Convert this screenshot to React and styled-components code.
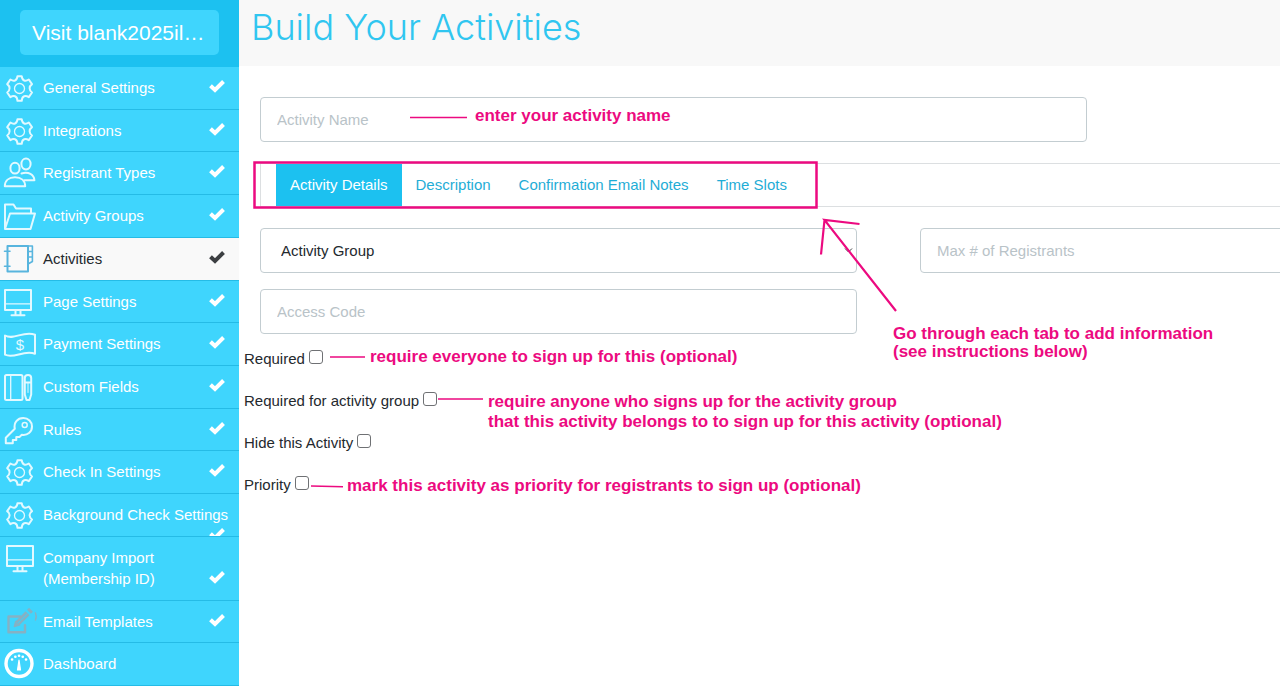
import React, { useState } from "react"
import styled, { createGlobalStyle, css } from "styled-components"

const GlobalStyle = createGlobalStyle`
    *, *::before, *::after {
        box-sizing: border-box;
    }

    body {
        margin: 0;
        background-color: #ffffff;
        color: #24292e;
        font-family: "Liberation Sans", Arial, sans-serif;
        font-size: 15px;
        line-height: 21px;
    }

    button, input, select {
        font: inherit;
    }
`

const pink = "#ec0a80"

const Page = styled.div`
    display: flex;
    min-height: 100vh;
    overflow: hidden;
`

const Sidebar = styled.aside`
    display: flex;
    flex-direction: column;
    flex: 0 0 239px;
    min-width: 0;
    background-color: #3fd5fd;
`

const SidebarTop = styled.div`
    padding: 10px 20px 12px;
    background-color: #1cc1f0;
`

const VisitButton = styled.button`
    display: block;
    width: 100%;
    height: 45px;
    padding: 0 12px;
    border: 0;
    border-radius: 5px;
    background-color: #3fd5fd;
    color: #ffffff;
    font-size: 21px;
    text-align: left;
    white-space: nowrap;
    cursor: pointer;
`

const Menu = styled.ul`
    display: flex;
    flex: 1;
    flex-direction: column;
    margin: 0;
    padding: 0;
    list-style: none;
`

const MenuItem = styled.li`
    display: flex;
    flex: 1 0 ${props => (props.$tall ? "63px" : "42px")};
    height: ${props => (props.$tall ? "63px" : "42px")};
    overflow: hidden;
    border-bottom: 1px solid #25bbe6;
    background-color: ${props => (props.$active ? "#f9f9f9" : "transparent")};
`

const MenuLink = styled.a`
    display: flex;
    flex: 1;
    gap: 5px;
    min-width: 0;
    padding: 0 14px 0 2px;
    color: ${props => (props.$active ? "#24292e" : "#ffffff")};
    text-decoration: none;
`

const MenuIcon = styled.span`
    display: flex;
    flex: 0 0 36px;
    height: 36px;
    margin-top: 3px;
    color: ${props => (props.$active ? "#58b5de" : "#e2f9ff")};
`

const MenuText = styled.span`
    display: flex;
    flex: 1;
    flex-wrap: wrap;
    align-content: flex-start;
    align-items: flex-end;
    justify-content: space-between;
    min-width: 0;
    padding-top: 10px;
    white-space: nowrap;
`

const Tick = styled.svg`
    width: 16px;
    height: 21px;
    margin-left: auto;
    fill: none;
    stroke: ${props => (props.$active ? "#3c3f42" : "#ffffff")};
    stroke-width: 4;
`

const Main = styled.main`
    position: relative;
    flex: 1;
    min-width: 0;
    overflow: hidden;
`

const PageHeader = styled.header`
    height: 66px;
    padding-left: 12px;
    background-color: #f8f8f8;
`

const Title = styled.h1`
    margin: 0;
    color: #30c6f0;
    font-family: Inter, "Liberation Sans", sans-serif;
    font-size: 36px;
    font-weight: 300;
    line-height: 54px;
`

const Form = styled.form`
    display: flex;
    flex-direction: column;
    padding: 31px 0 0 21px;
`

const fieldStyle = css`
    width: 100%;
    height: 45px;
    border: 1px solid #c3cdd1;
    border-radius: 4px;
    background-color: #ffffff;
    color: #24292e;
`

const Input = styled.input`
    ${fieldStyle}
    padding: 0 16px 1px;

    &::placeholder {
        color: #b9c3c8;
        opacity: 1;
    }
`

const NameInput = styled(Input)`
    max-width: 827px;
`

const Tabs = styled.div`
    display: flex;
    width: 1260px;
    height: 44px;
    margin: 21px 0;
    padding-left: 15px;
    border: 1px solid #dcdfe1;
`

const Tab = styled.button`
    padding: 0 14px 2px;
    border: 0;
    background-color: ${props => (props.$active ? "#1cc1f0" : "transparent")};
    color: ${props => (props.$active ? "#ffffff" : "#1fadd6")};
    cursor: pointer;
`

const Fields = styled.div`
    display: grid;
    grid-template-columns: repeat(2, minmax(597px, 1fr));
    gap: 16px 63px;
`

const SelectWrap = styled.div`
    position: relative;
`

const Select = styled.select`
    ${fieldStyle}
    padding: 0 20px 1px;
    appearance: none;
`

const SelectArrow = styled.svg`
    position: absolute;
    top: 19px;
    right: 4px;
    pointer-events: none;
`

const Checks = styled.div`
    display: flex;
    flex-direction: column;
    gap: 21px;
    margin: 14px 0 0 -16px;
`

const CheckRow = styled.div`
    display: flex;
    align-items: flex-start;
    gap: 4px;
`

const Checkbox = styled.input`
    width: 14px;
    height: 14px;
    margin: 2px 0 0;
    border: 1px solid #6f7174;
    border-radius: 3px;
    background-color: #ffffff;
    appearance: none;

    &:checked {
        background-color: #1cc1f0;
    }
`

const Annotations = styled.div`
    position: absolute;
    inset: 0;
    pointer-events: none;
`

const Strokes = styled.svg`
    position: absolute;
    top: 0;
    left: 0;
    fill: none;
    stroke: ${pink};
`

const Note = styled.p`
    position: absolute;
    top: ${props => props.$top}px;
    left: ${props => props.$left}px;
    margin: 0;
    color: ${pink};
    font-size: 17px;
    font-weight: 700;
    line-height: ${props => props.$leading || 18}px;
    white-space: nowrap;
`

const Drawing = ({ children, width = 2 }) => (
    <svg
        width="36"
        height="36"
        viewBox="0 0 36 36"
        fill="none"
        stroke="currentColor"
        strokeWidth={width}
        strokeLinejoin="round"
        strokeLinecap="round"
        aria-hidden="true"
    >
        {children}
    </svg>
)

const Gear = () => (
    <Drawing>
        <path d="M15.5 6.2h4.2q.3 3.5 2.5 4.3 2 .8 4.6-1l3.2 4.6q-2.600 2-2.400 4.200.1 2.600 2.400 4.200l-3.200 4.600q-2.600-1.500-4.600-.8-2.200.8-2.500 4.500h-4.200q-.3-3.700-2.500-4.500-2-.7-4.600.8l-3.200-4.600q2.300-1.600 2.400-4.200.2-2.200-2.400-4.200l3.200-4.600q2.600 1.800 4.600 1 2.200-.8 2.500-4.300z" />
        <circle cx="17.5" cy="18.5" r="5" strokeWidth="1.3" />
    </Drawing>
)

const Users = () => (
    <Drawing>
        <ellipse cx="13" cy="13.2" rx="4.6" ry="5.4" />
        <path d="M2.8 31.2c0-5.5 4-9 10.2-9s10.2 3.5 10.2 9z" />
        <ellipse cx="24" cy="9" rx="4.6" ry="5.4" />
        <path d="M19.5 18.5c7-2 12.5 1 12.9 6.8H22.5" />
    </Drawing>
)

const Folder = () => (
    <Drawing>
        <path d="M3 31V6.5h8.500l2.500 4h15v4.500M3 31l5-15.500h25L28.500 31z" />
    </Drawing>
)

const Notebook = () => (
    <Drawing>
        <path d="M5.5 5h20.500v25.500H5.500z" />
        <path d="M26 5h4.400v15.500L26 23M26 10.500h4.400M26 16h4.400M2.500 10.200H8M2.500 25.300H8" strokeWidth="1.6" />
    </Drawing>
)

const Monitor = ({ x = 0 }) => (
    <Drawing>
        <g transform={`translate(${x} 0)`}>
            <path d="M3 6h26v20H3z" />
            <path d="M3 19.8h26" strokeWidth="1.3" />
            <path d="M13.5 26v5M18.5 26v5M9.5 31.3h13" />
        </g>
    </Drawing>
)

const Money = () => (
    <Drawing>
        <path d="M3 9.5c9 5 18-5 30-.8v19c-12-4-21 5.500-30 1z" />
        <text
            x="18"
            y="24"
            fill="currentColor"
            stroke="none"
            fontSize="15"
            textAnchor="middle"
        >
            $
        </text>
    </Drawing>
)

const BookPen = () => (
    <Drawing>
        <rect x="3" y="6" width="17.5" height="25" rx="1.5" />
        <path d="M8.7 6v25" strokeWidth="1.3" />
        <path d="M22.8 9q0-3 3.200-3t3.200 3v16.500L27.500 31h-3l-1.700-5.500zM22.800 13.500h6.400" />
        <path d="M26 13.5v10" strokeWidth="1" />
    </Drawing>
)

const Key = () => (
    <Drawing>
        <path d="M3.8 31.2v-5.5l9-9C11.500 10.500 15.500 6 21.300 6c5 0 8.700 3.700 8.700 8.500 0 5.500-4.500 9.300-10.200 8.300l-2.300 2.200h-3.200v3h-3.500v3.200z" />
        <circle cx="22.7" cy="13" r="2.5" strokeWidth="1.5" />
    </Drawing>
)

const EditIcon = () => (
    <Drawing width={2.4}>
        <g stroke="#86b1c3">
            <path d="M18 12.5H6.500v15.700h16.500v-7" />
            <path d="M15.500 19.300L25.500 9.300" strokeWidth="5.500" strokeLinecap="butt" />
            <path d="M27 7.800l2-2" strokeWidth="5.500" strokeLinecap="butt" />
            <path d="M13.5 17.500l-1.500 5.300 5.300-1.500z" fill="#86b1c3" strokeWidth="1" />
            <path d="M16 19l9-9" stroke="#48cdf2" strokeWidth="1" />
            <path d="M33.500 9q1.500 3.500 0 7" strokeWidth="1.4" />
        </g>
    </Drawing>
)

const Gauge = () => (
    <Drawing width={3.4}>
        <g stroke="#ffffff">
            <circle cx="17" cy="17.5" r="13" />
            <path d="M17 14l-1.500 10h3z" strokeWidth="1.2" fill="#ffffff" />
            <path d="M10 13.500h.1M13.300 10.800h.1M17 9.800h.1M20.700 10.800h.1M24 13.500h.1" strokeWidth="2.600" />
        </g>
    </Drawing>
)

const menu = [
    { label: "General Settings", icon: <Gear /> },
    { label: "Integrations", icon: <Gear /> },
    { label: "Registrant Types", icon: <Users /> },
    { label: "Activity Groups", icon: <Folder /> },
    { label: "Activities", icon: <Notebook />, active: true },
    { label: "Page Settings", icon: <Monitor /> },
    { label: "Payment Settings", icon: <Money /> },
    { label: "Custom Fields", icon: <BookPen /> },
    { label: "Rules", icon: <Key /> },
    { label: "Check In Settings", icon: <Gear /> },
    { label: "Background Check Settings", icon: <Gear /> },
    { label: <>Company Import<br />(Membership ID)</>, icon: <Monitor x={2} />, tall: true },
    { label: "Email Templates", icon: <EditIcon /> },
    { label: "Dashboard", icon: <Gauge />, unchecked: true },
]

const tabs = ["Activity Details", "Description", "Confirmation Email Notes", "Time Slots"]

const options = [
    { id: "required", label: "Required" },
    { id: "required-group", label: "Required for activity group" },
    { id: "hide", label: "Hide this Activity" },
    { id: "priority", label: "Priority" },
]

export default function App() {
    const [tab, setTab] = useState(tabs[0])

    return (
        <>
            <GlobalStyle />
            <Page>
                <Sidebar>
                    <SidebarTop>
                        <VisitButton type="button">Visit blank2025il…</VisitButton>
                    </SidebarTop>
                    <Menu>
                        {menu.map(({ label, icon, active, tall, unchecked }, i) => (
                            <MenuItem key={i} $active={active} $tall={tall}>
                                <MenuLink href="#" $active={active}>
                                    <MenuIcon $active={active}>{icon}</MenuIcon>
                                    <MenuText>
                                        <span>{label}</span>
                                        {!unchecked && (
                                            <Tick $active={active} viewBox="0 0 16 21" aria-hidden="true">
                                                <path d="M1.500 8.700L6 13L14.500 4.500" />
                                            </Tick>
                                        )}
                                    </MenuText>
                                </MenuLink>
                            </MenuItem>
                        ))}
                    </Menu>
                </Sidebar>

                <Main>
                    <PageHeader>
                        <Title>Build Your Activities</Title>
                    </PageHeader>

                    <Form>
                        <NameInput placeholder="Activity Name" aria-label="Activity Name" />

                        <Tabs role="tablist">
                            {tabs.map(name => (
                                <Tab
                                    key={name}
                                    type="button"
                                    role="tab"
                                    aria-selected={tab === name}
                                    $active={tab === name}
                                    onClick={() => setTab(name)}
                                >
                                    {name}
                                </Tab>
                            ))}
                        </Tabs>

                        <Fields>
                            <SelectWrap>
                                <Select aria-label="Activity Group">
                                    <option>Activity Group</option>
                                </Select>
                                <SelectArrow width="9" height="7" viewBox="0 0 9 7" fill="none" stroke="#3c3f42">
                                    <path d="M1 1.5l3.5 3.5L8 1.5" />
                                </SelectArrow>
                            </SelectWrap>
                            <Input placeholder="Max # of Registrants" aria-label="Max # of Registrants" />
                            <Input placeholder="Access Code" aria-label="Access Code" />
                        </Fields>

                        <Checks>
                            {options.map(({ id, label }) => (
                                <CheckRow key={id}>
                                    <label htmlFor={id}>{label}</label>
                                    <Checkbox id={id} type="checkbox" />
                                </CheckRow>
                            ))}
                        </Checks>
                    </Form>

                    <Annotations>
                        <Strokes width="1041" height="686" aria-hidden="true">
                            <rect x="15.5" y="162.5" width="562" height="45" strokeWidth="2.5" />
                            <path d="M171 117.5h57M91 357h35M199 399h45M72 486l32 .8" strokeWidth="1.5" />
                            <path d="M657 311L585.5 220l35 4M585.5 220L582 254.5" strokeWidth="2.2" />
                        </Strokes>
                        <Note $top={107} $left={236}>enter your activity name</Note>
                        <Note $top={325} $left={654}>
                            Go through each tab to add information<br />(see instructions below)
                        </Note>
                        <Note $top={348} $left={131}>require everyone to sign up for this (optional)</Note>
                        <Note $top={392} $left={249} $leading={20}>
                            require anyone who signs up for the activity group<br />
                            that this activity belongs to to sign up for this activity (optional)
                        </Note>
                        <Note $top={477} $left={108}>
                            mark this activity as priority for registrants to sign up (optional)
                        </Note>
                    </Annotations>
                </Main>
            </Page>
        </>
    )
}
